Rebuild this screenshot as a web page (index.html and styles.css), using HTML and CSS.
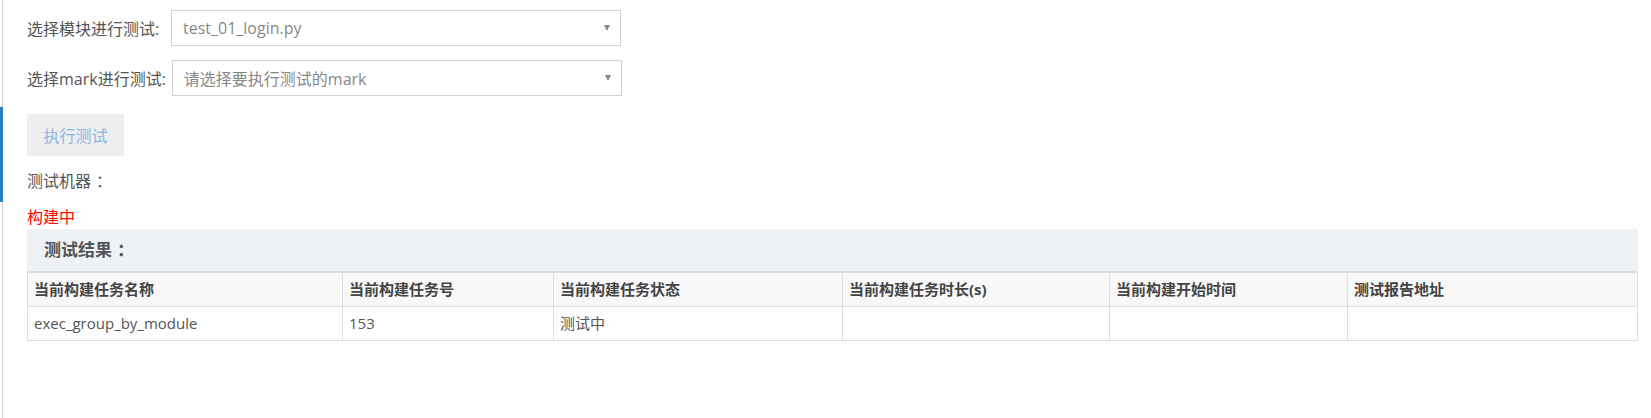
FILE: index.html
```html
<!DOCTYPE html>
<html lang="zh-CN">
<head>
    <meta charset="UTF-8">
    <meta name="viewport" content="width=device-width, initial-scale=1.0">
    <title>执行测试</title>
    <link rel="stylesheet" href="styles.css">
</head>
<body>
    <div class="page">
        <div class="side-handle"></div>
        <div class="content">
            <div class="form-row">
                <label class="form-label">选择模块进行测试:</label>
                <div class="select">
                    <span class="select-value">test_01_login.py</span>
                    <span class="caret"></span>
                </div>
            </div>
            <div class="form-row second">
                <label class="form-label">选择mark进行测试:</label>
                <div class="select">
                    <span class="select-value">请选择要执行测试的mark</span>
                    <span class="caret"></span>
                </div>
            </div>
            <button class="btn-run" disabled>执行测试</button>
            <div class="machine">测试机器<span class="fw-colon">：</span></div>
            <div class="status">构建中</div>
            <div class="panel">
                <div class="panel-heading">测试结果<span class="fw-colon">：</span></div>
                <table class="result-table">
                    <thead>
                        <tr>
                            <th class="c1">当前构建任务名称</th>
                            <th class="c2">当前构建任务号</th>
                            <th class="c3">当前构建任务状态</th>
                            <th class="c4">当前构建任务时长(s)</th>
                            <th class="c5">当前构建开始时间</th>
                            <th class="c6">测试报告地址</th>
                        </tr>
                    </thead>
                    <tbody>
                        <tr>
                            <td>exec_group_by_module</td>
                            <td>153</td>
                            <td>测试中</td>
                            <td></td>
                            <td></td>
                            <td></td>
                        </tr>
                    </tbody>
                </table>
            </div>
        </div>
    </div>
</body>
</html>
```

FILE: styles.css
```css
html, body {
    margin: 0;
    height: 100%;
    background: #fff;
}

body {
    font-family: "Open Sans", "Noto Sans CJK SC", sans-serif;
    color: #555;
}

.page {
    position: relative;
    height: 100%;
    margin-left: 2px;
    border-left: 1px solid #d4d4d4;
}

.side-handle {
    position: absolute;
    left: -3px;
    top: 107px;
    width: 3px;
    height: 95px;
    background: #2b80c2;
}

.content {
    padding: 10px 13px 0 24px;
}

.form-row {
    display: flex;
    align-items: center;
}

.form-row.second {
    margin-top: 14px;
}

.form-label {
    min-width: 138px;
    font-size: 16px;
    color: #555;
    margin-right: 6px;
}

.select {
    box-sizing: border-box;
    width: 450px;
    height: 36px;
    border: 1px solid #d2d2d2;
    display: flex;
    align-items: center;
    justify-content: space-between;
    padding: 0 10px 0 11px;
    background: #fff;
}

.select-value {
    font-size: 16px;
    color: #888;
}

.caret {
    width: 0;
    height: 0;
    border-left: 3px solid transparent;
    border-right: 3px solid transparent;
    border-top: 6px solid #888;
}

.btn-run {
    display: block;
    margin-top: 18px;
    width: 97px;
    height: 42px;
    border: none;
    background: #eee;
    color: #8fb6df;
    font-family: "Noto Sans CJK SC", sans-serif;
    font-size: 16px;
    padding: 0;
}

/* full-width colon sits in the middle of its cell in the original */
.fw-colon {
    padding-left: 5px;
}

.machine {
    margin-top: 14px;
    font-size: 16px;
    line-height: 22px;
    color: #555;
}

.status {
    margin-top: 14px;
    font-size: 16px;
    line-height: 22px;
    color: #ff0000;
}

.panel {
    margin-top: 1px;
}

.panel-heading {
    height: 42px;
    line-height: 42px;
    padding-left: 17px;
    background: #eef1f6;
    border-bottom: 1px solid #dcdcdc;
    font-size: 17px;
    font-weight: bold;
    color: #555;
}

.result-table {
    width: 100%;
    border-collapse: collapse;
    table-layout: fixed;
    font-size: 15px;
    color: #555;
}

.result-table th,
.result-table td {
    border: 1px solid #ddd;
    padding: 6px 6px;
    height: 21px;
    line-height: 21px;
    text-align: left;
}

.result-table th {
    background: #f8f8f8;
    font-weight: bold;
    color: #444;
}

.c1 { width: 302px; }
.c2 { width: 198px; }
.c3 { width: 276px; }
.c4 { width: 254px; }
.c5 { width: 225px; }
```
